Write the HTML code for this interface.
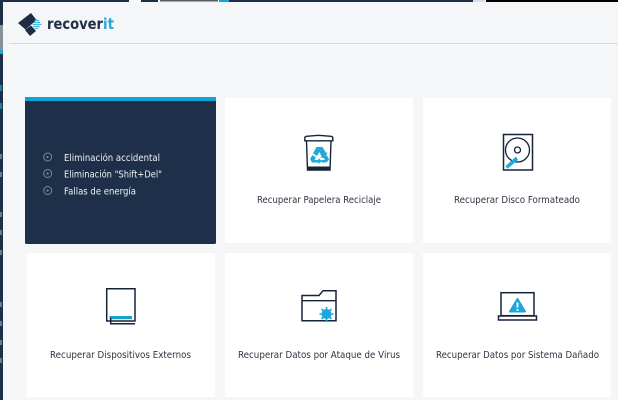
<!DOCTYPE html>
<html><head><meta charset="utf-8"><style>
html,body{margin:0;padding:0;width:618px;height:400px;overflow:hidden;background:#f5f6f8}
svg{display:block}
text{font-family:"DejaVu Sans",sans-serif}
.t{font-size:9.800px;fill:#2c3440}
.w{font-size:9.800px;fill:#eef0f3}
</style></head><body>
<svg width="618" height="400" viewBox="0 0 618 400" xmlns="http://www.w3.org/2000/svg">
<rect width="618" height="400" fill="#f5f6f8"/>
<!-- top strip -->
<rect x="0" y="0" width="129" height="2" fill="#1d2f4a"/>
<rect x="141" y="0" width="17" height="2" fill="#1d2f4a"/>
<rect x="160" y="0" width="58" height="1.500" fill="#555c66"/>
<rect x="219" y="0" width="10" height="2" fill="#12a5d8"/>
<rect x="229" y="0" width="244" height="2" fill="#1d2f4a"/>
<rect x="473" y="0" width="12" height="2" fill="#dcdde0"/>
<rect x="486" y="0" width="132" height="2" fill="#000"/>
<!-- left strip -->
<rect x="0" y="0" width="3" height="400" fill="#1d2f4a"/>
<rect x="0" y="25" width="3" height="25" fill="#8a9098"/>
<rect x="0" y="50" width="3" height="4" fill="#1ba6d4"/>
<rect x="0" y="85" width="2" height="6" fill="#2a7ba3"/>
<rect x="0" y="103" width="2" height="6" fill="#2a7ba3"/>
<rect x="0" y="154" width="2" height="5" fill="#6f7c8c"/>
<rect x="0" y="172" width="2" height="5" fill="#6f7c8c"/>
<rect x="0" y="212" width="2" height="5" fill="#6f7c8c"/>
<rect x="0" y="230" width="2" height="5" fill="#6f7c8c"/>
<rect x="0" y="250" width="2" height="5" fill="#6f7c8c"/>
<rect x="0" y="302" width="2" height="5" fill="#6f7c8c"/>
<rect x="0" y="321" width="2" height="5" fill="#6f7c8c"/>
<rect x="0" y="340" width="2" height="5" fill="#6f7c8c"/>
<rect x="0" y="358" width="2" height="5" fill="#6f7c8c"/>
<!-- header -->
<rect x="9" y="43" width="609" height="1" fill="#d9dbde"/>
<polygon points="18,23 31,13 36.500,20 25.500,29.500" fill="#1f2c44"/>
<polygon points="25,30 31,25.500 36,31 30,36" fill="#1f2c44"/>
<g fill="#3cb8de"><rect x="34.500" y="19.800" width="4.500" height="1.100"/><rect x="34" y="21.800" width="6" height="1.100"/><rect x="32.500" y="23.800" width="9" height="1.100"/><rect x="33" y="25.800" width="7" height="1.100"/><rect x="34.500" y="27.800" width="4" height="1.100"/></g>
<text x="47" y="29" font-size="15" font-weight="bold" fill="#1f2c44" textLength="56" lengthAdjust="spacingAndGlyphs">recover</text>
<text x="103" y="29" font-size="15" font-weight="bold" fill="#22a9d8" textLength="11" lengthAdjust="spacingAndGlyphs">it</text>
<!-- cards -->
<rect x="25" y="97" width="191" height="147" rx="1.500" fill="#1e3049"/>
<rect x="25" y="97" width="191" height="4" fill="#0fa3d6"/>
<rect x="225" y="98" width="188" height="145" fill="#fff"/>
<rect x="423" y="98" width="188" height="145" fill="#fff"/>
<rect x="27" y="253" width="188" height="144" fill="#fff"/>
<rect x="225" y="253" width="188" height="144" fill="#fff"/>
<rect x="423" y="253" width="188" height="144" fill="#fff"/>
<!-- dark card list -->
<g fill="none" stroke="#7b8894" stroke-width="1"><circle cx="47.700" cy="157" r="4"/><circle cx="47.700" cy="173.500" r="4"/><circle cx="47.700" cy="190.500" r="4"/></g>
<g fill="#7b8894"><polygon points="46.700,155.500 49.200,157 46.700,158.500"/><polygon points="46.700,172 49.200,173.500 46.700,175"/><polygon points="46.700,189 49.200,190.500 46.700,192"/></g>
<text class="w" x="64" y="161" textLength="96" lengthAdjust="spacingAndGlyphs">Eliminación accidental</text>
<text class="w" x="64" y="177.500" textLength="98" lengthAdjust="spacingAndGlyphs">Eliminación "Shift+Del"</text>
<text class="w" x="64" y="194.500" textLength="72" lengthAdjust="spacingAndGlyphs">Fallas de energía</text>
<!-- labels -->
<text class="t" x="257" y="203" textLength="124" lengthAdjust="spacingAndGlyphs">Recuperar Papelera Reciclaje</text>
<text class="t" x="454" y="203" textLength="126" lengthAdjust="spacingAndGlyphs">Recuperar Disco Formateado</text>
<text class="t" x="50" y="358" textLength="141" lengthAdjust="spacingAndGlyphs">Recuperar Dispositivos Externos</text>
<text class="t" x="238" y="358" textLength="162" lengthAdjust="spacingAndGlyphs">Recuperar Datos por Ataque de Virus</text>
<text class="t" x="436" y="358" textLength="163" lengthAdjust="spacingAndGlyphs">Recuperar Datos por Sistema Dañado</text>
<!-- trash icon -->
<g fill="none" stroke="#16233a" stroke-width="1.400">
<path d="M304.800 140.800V138Q304.800 136.500 306.500 136.300L318.500 135.300L331 136.300Q332.800 136.500 332.800 138V140.800Z" fill="#fff"/>
<path d="M306.500 141L307.500 170H330L331 141"/>
</g>
<rect x="307.500" y="166.500" width="22.500" height="3.800" fill="#16233a"/>
<!-- recycle arrows -->
<g fill="#22a9dc">
<polygon points="316.500,147 322.500,147 326,153 327.500,152 325.500,158 320,157.500 321.500,156.500 319.500,152 317,156 313,153.500"/>
<polygon points="312.500,155 316,157.500 314.500,160 318.500,160 318.500,158 322,161 318.500,164 318.500,162.500 312,162.500 310,159"/>
<polygon points="327,155.500 329,159.500 326.500,162.500 321.500,162.500 321.500,160 325,160 323.500,157.500"/>
</g>
<!-- disk icon -->
<rect x="503.500" y="134.500" width="29" height="35.500" fill="none" stroke="#16233a" stroke-width="1.500"/>
<circle cx="517.500" cy="150" r="12" fill="none" stroke="#16233a" stroke-width="1.300"/>
<circle cx="517.500" cy="150" r="3" fill="none" stroke="#16233a" stroke-width="1.300"/>
<path d="M505.500 166L516 156.500L518 160L507.500 168.800Z" fill="#22a9dc"/>
<!-- external book icon -->
<path d="M106.700 288.700H135V321H106.700Z" fill="none" stroke="#16233a" stroke-width="1.500"/>
<rect x="109.500" y="316" width="22.500" height="3.200" fill="#16a0cd"/>
<path d="M110.700 318V323.700H135" fill="none" stroke="#16233a" stroke-width="1.500"/>
<!-- folder icon -->
<path d="M302 320.700V295.500H319L323 290.700H336V320.700Z" fill="none" stroke="#16233a" stroke-width="1.500"/>
<path d="M302 300.700H336" fill="none" stroke="#16233a" stroke-width="1.300"/>
<circle cx="326.500" cy="314" r="5" fill="#1da8dc"/>
<g stroke="#1da8dc" stroke-width="1.600"><path d="M326.500 307V321M319.500 314H333.500M321.500 309L331.500 319M331.500 309L321.500 319"/></g>
<!-- laptop icon -->
<rect x="501" y="292.700" width="33" height="23" fill="none" stroke="#16233a" stroke-width="1.500"/>
<rect x="498.500" y="316" width="38" height="4" fill="none" stroke="#16233a" stroke-width="1.500"/>
<path d="M517.500 299L525 311.500H510Z" fill="#1ea6d8" stroke="#1ea6d8" stroke-width="2" stroke-linejoin="round"/>
<rect x="516.600" y="302.500" width="1.800" height="5" fill="#fff"/>
<rect x="516.600" y="309" width="1.800" height="1.800" fill="#fff"/>
</svg>
</body></html>
